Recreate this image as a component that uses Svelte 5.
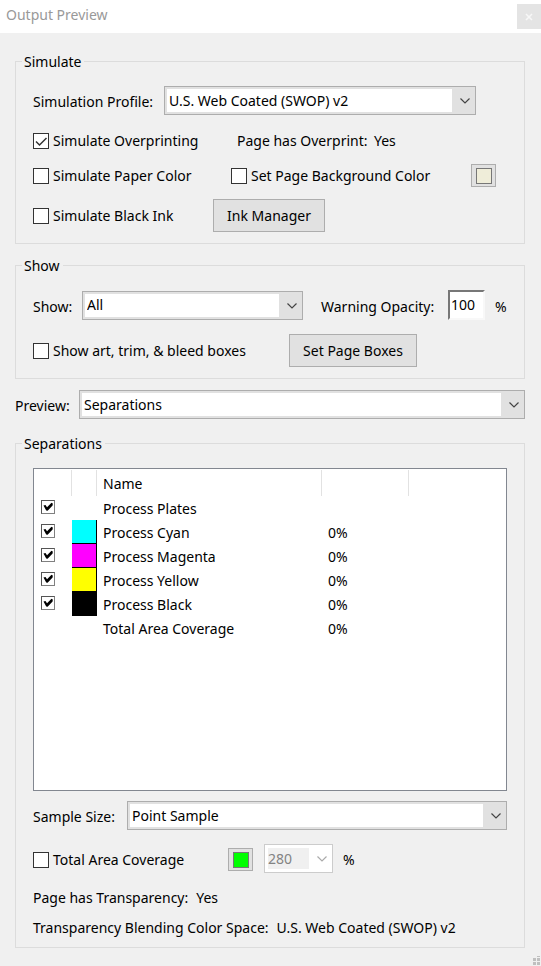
<script lang="ts">
  type Plate = {
    name: string;
    color?: string;
    checked?: boolean;
    coverage?: string;
  };

  let profile = $state('U.S. Web Coated (SWOP) v2');
  let show = $state('All');
  let preview = $state('Separations');
  let sampleSize = $state('Point Sample');
  let areaLimit = $state('280');

  let overprinting = $state(true);
  let paperColor = $state(false);
  let backgroundColor = $state(false);
  let blackInk = $state(false);
  let pageBoxes = $state(false);
  let totalArea = $state(false);
  let opacity = $state('100');

  let plates: Plate[] = $state([
    { name: 'Process Plates', checked: true },
    { name: 'Process Cyan', color: '#00ffff', checked: true, coverage: '0%' },
    { name: 'Process Magenta', color: '#ff00ff', checked: true, coverage: '0%' },
    { name: 'Process Yellow', color: '#ffff00', checked: true, coverage: '0%' },
    { name: 'Process Black', color: '#000000', checked: true, coverage: '0%' },
    { name: 'Total Area Coverage', coverage: '0%' },
  ]);
</script>

{#snippet chevron()}
  <svg class="chevron" width="10" height="6" viewBox="0 0 10 6" fill="none" stroke="currentColor">
    <path d="M0.5 0.5L5 5L9.5 0.5" stroke-width="1.2" />
  </svg>
{/snippet}

<main class="dialog">
  <header class="title-bar">
    <h1>Output Preview</h1>
    <button class="close-btn" aria-label="Close">
      <svg width="8" height="8" viewBox="0 0 8 8" stroke="currentColor" stroke-width="1.6">
        <path d="M1 1L7 7M7 1L1 7" />
      </svg>
    </button>
  </header>

  <div class="content">
    <fieldset>
      <legend>Simulate</legend>
      <div class="row profile-row">
        <label class="field-label" for="profile">Simulation Profile:</label>
        <div class="combo">
          <select id="profile" bind:value={profile}>
            <option>U.S. Web Coated (SWOP) v2</option>
          </select>
          {@render chevron()}
        </div>
      </div>
      <div class="row overprint-row">
        <label class="check"><input type="checkbox" bind:checked={overprinting} />Simulate Overprinting</label>
        <span>Page has Overprint:</span>
        <span>Yes</span>
      </div>
      <div class="row paper-row">
        <label class="check"><input type="checkbox" bind:checked={paperColor} />Simulate Paper Color</label>
        <label class="check"><input type="checkbox" bind:checked={backgroundColor} />Set Page Background Color</label>
        <button class="swatch-btn" aria-label="Page background color"><span class="swatch paper"></span></button>
      </div>
      <div class="row ink-row">
        <label class="check"><input type="checkbox" bind:checked={blackInk} />Simulate Black Ink</label>
        <button class="btn">Ink Manager</button>
      </div>
    </fieldset>

    <fieldset class="show-group">
      <legend>Show</legend>
      <div class="row show-row">
        <label class="field-label" for="show">Show:</label>
        <div class="combo">
          <select id="show" bind:value={show}>
            <option>All</option>
          </select>
          {@render chevron()}
        </div>
        <label class="field-label opacity-label" for="opacity">Warning Opacity:</label>
        <input id="opacity" class="text-input" type="text" bind:value={opacity} />
        <span class="field-label unit">%</span>
      </div>
      <div class="row boxes-row">
        <label class="check"><input type="checkbox" bind:checked={pageBoxes} />Show art, trim, &amp; bleed boxes</label>
        <button class="btn">Set Page Boxes</button>
      </div>
    </fieldset>

    <div class="row preview-row">
      <label class="field-label" for="preview">Preview:</label>
      <div class="combo">
        <select id="preview" bind:value={preview}>
          <option>Separations</option>
        </select>
        {@render chevron()}
      </div>
    </div>

    <fieldset class="separations">
      <legend>Separations</legend>
      <div class="plates">
        <table>
          <colgroup>
            <col class="col-check" />
            <col class="col-color" />
            <col class="col-name" />
            <col class="col-value" />
            <col />
          </colgroup>
          <thead>
            <tr>
              <th></th>
              <th></th>
              <th scope="col">Name</th>
              <th></th>
              <th></th>
            </tr>
          </thead>
          <tbody>
            {#each plates as plate}
              <tr>
                <td class="plate-check">
                  {#if plate.checked !== undefined}
                    <input type="checkbox" aria-label={plate.name} bind:checked={plate.checked} />
                  {/if}
                </td>
                <td class="plate-ink">
                  {#if plate.color}
                    <div class="plate-color" style="background: {plate.color}"></div>
                  {/if}
                </td>
                <td>{plate.name}</td>
                <td>{plate.coverage ?? ''}</td>
                <td></td>
              </tr>
            {/each}
          </tbody>
        </table>
      </div>

      <div class="row sample-row">
        <label class="field-label" for="sample">Sample Size:</label>
        <div class="combo">
          <select id="sample" bind:value={sampleSize}>
            <option>Point Sample</option>
          </select>
          {@render chevron()}
        </div>
      </div>
      <div class="row area-row">
        <label class="check"><input type="checkbox" bind:checked={totalArea} />Total Area Coverage</label>
        <button class="swatch-btn" aria-label="Coverage highlight color"><span class="swatch green"></span></button>
        <div class="combo disabled">
          <select aria-label="Total area coverage limit" bind:value={areaLimit} disabled>
            <option>280</option>
          </select>
          {@render chevron()}
        </div>
        <span class="field-label unit">%</span>
      </div>
      <div class="row info-row">
        <span>Page has Transparency:</span>
        <span>Yes</span>
      </div>
      <div class="row info-row">
        <span>Transparency Blending Color Space:</span>
        <span>U.S. Web Coated (SWOP) v2</span>
      </div>
    </fieldset>
  </div>

  <svg class="grip" width="7" height="9" viewBox="0 0 7 9" fill="#bfbfbf">
    <path d="M4 0h3v1h-3zM0 2h3v3h-3zM4 2h3v3h-3zM0 6h3v3h-3zM4 6h3v3h-3z" />
  </svg>
</main>

<style>
  :global(body) {
    margin: 0;
    background: #f0f0f0;
  }

  .dialog {
    position: relative;
    box-sizing: border-box;
    min-height: 100vh;
    font-family: "Segoe UI", "Noto Sans", sans-serif;
    font-size: 14px;
    line-height: 20px;
    color: #000;
    background: #f0f0f0;
  }

  .dialog * {
    box-sizing: border-box;
  }

  button,
  input,
  select {
    margin: 0;
    font: inherit;
    color: inherit;
  }

  .title-bar {
    display: flex;
    align-items: flex-start;
    justify-content: space-between;
    height: 33px;
    padding: 4px 0 0 6px;
    background: #fff;
  }

  h1 {
    margin: 0;
    font-size: 14px;
    font-weight: 400;
    line-height: 22px;
    color: #999;
  }

  .close-btn {
    display: flex;
    align-items: center;
    justify-content: center;
    width: 24px;
    height: 25px;
    padding: 0;
    border: none;
    background: #e4e4e4;
    color: #f7f7f7;
  }

  .content {
    padding: 19px 16px 18px 15px;
  }

  fieldset {
    display: flex;
    flex-direction: column;
    gap: 12px;
    min-width: 0;
    margin: 0;
    padding: 15px 17px 11px;
    border: 1px solid #dcdcdc;
  }

  legend {
    height: 19px;
    margin-left: -11px;
    padding: 0 3px 0 2px;
  }

  .show-group {
    gap: 15px;
    margin-top: 12px;
  }

  .row {
    display: grid;
    align-items: center;
    min-height: 22px;
    white-space: nowrap;
  }

  /* field captions sit slightly below the text inside their controls */
  .field-label {
    padding-top: 3px;
  }

  .profile-row {
    grid-template-columns: 131px minmax(0, 312px);
    margin-bottom: 3px;
  }

  .overprint-row {
    grid-template-columns: 204px 137px auto;
  }

  .paper-row {
    grid-template-columns: 198px 240px 25px;
  }

  .ink-row {
    grid-template-columns: 180px 112px;
  }

  .show-row {
    grid-template-columns: 49px minmax(0, 221px) 145px 37px auto;
    height: 29px;
  }

  .opacity-label {
    padding-left: 18px;
  }

  .unit {
    padding-left: 10px;
  }

  .boxes-row {
    grid-template-columns: 256px 128px;
  }

  .preview-row {
    grid-template-columns: 64px 1fr;
    margin: 11px 0 15px;
  }

  .sample-row {
    grid-template-columns: 94px 1fr;
  }

  .area-row {
    grid-template-columns: 195px 36px 69px auto;
    margin: 4px 0 5px;
  }

  .area-row .check {
    padding-top: 2px;
  }

  .area-row .swatch-btn {
    margin-top: 2px;
  }

  .check {
    display: flex;
    align-items: center;
    gap: 4px;
  }

  input[type='checkbox'] {
    appearance: none;
    flex: none;
    width: 16px;
    height: 16px;
    border: 1px solid #333;
    background: #fff no-repeat center;
  }

  .check input:checked {
    background-image: url("data:image/svg+xml,%3Csvg xmlns='http://www.w3.org/2000/svg' width='14' height='14' fill='none' stroke='%23333' stroke-width='1.5'%3E%3Cpath d='M2 7.5l3.5 3.5L12.5 4'/%3E%3C/svg%3E");
  }

  .combo {
    position: relative;
    height: 29px;
  }

  select {
    display: block;
    appearance: none;
    width: 100%;
    height: 29px;
    padding: 0 26px 0 4px;
    border: 1px solid #adadad;
    border-radius: 0;
    outline: none;
    background: #e1e1e1 linear-gradient(#fff, #fff) no-repeat 2px 2px / calc(100% - 25px) 23px;
  }

  .chevron {
    position: absolute;
    top: 12px;
    right: 6px;
    color: #444;
    pointer-events: none;
  }

  .disabled select {
    padding-left: 3px;
    border-color: #ccc;
    background: #fff linear-gradient(#f0f0f0, #f0f0f0) no-repeat 3px 3px / calc(100% - 26px) 21px;
    color: #838383;
    opacity: 1;
  }

  .disabled .chevron {
    color: #aaa;
  }

  .btn {
    height: 33px;
    padding: 0;
    border: 1px solid #adadad;
    background: #e1e1e1;
  }

  .swatch-btn {
    display: flex;
    align-items: center;
    justify-content: center;
    width: 25px;
    height: 23px;
    padding: 0;
    border: 1px solid #adadad;
    background: #e1e1e1;
  }

  .swatch {
    width: 16px;
    height: 16px;
    border: 1px solid #777;
  }

  .paper {
    background: #efedd9;
  }

  .green {
    background: #00ff00;
  }

  .text-input {
    width: 37px;
    height: 30px;
    padding: 0 0 2px 1px;
    border: 2px solid;
    border-color: #777 #f8f8f8 #f8f8f8 #777;
    outline: none;
    background: #fff;
  }

  .separations {
    gap: 10px;
    padding-bottom: 9px;
  }

  .plates {
    min-height: 323px;
    border: 1px solid #828790;
    background: #fff;
  }

  table {
    width: 100%;
    table-layout: fixed;
    border-collapse: collapse;
  }

  .col-check {
    width: 38px;
  }

  .col-color {
    width: 25px;
  }

  .col-name {
    width: 225px;
  }

  .col-value {
    width: 87px;
  }

  th {
    height: 27px;
    padding: 2px 0 0 6px;
    background: linear-gradient(#e2e2e2, #e2e2e2) no-repeat right bottom / 1px 26px;
    font-weight: 400;
    text-align: left;
  }

  th:last-child {
    background: none;
  }

  td {
    height: 24px;
    padding: 2px 0 0 6px;
  }

  .plate-ink {
    padding: 0;
  }

  .plate-check {
    padding: 0 0 2px 7px;
    line-height: 0;
  }

  .plate-check input[type='checkbox'] {
    width: 14px;
    height: 14px;
    border: 1px solid #808080;
    border-top-color: #555;
    border-left-color: #555;
  }

  .plate-check input:checked {
    background-image: url("data:image/svg+xml,%3Csvg xmlns='http://www.w3.org/2000/svg' width='12' height='12'%3E%3Cpath d='M1.5 4.5L3.5 4L5 6.3L9.5 1.8L10.8 2.6L10.6 4.6L5.6 9.8L4.2 9.6z'/%3E%3C/svg%3E");
  }

  .plate-color {
    height: 24px;
    border-right: 1px solid #000;
    border-bottom: 1px solid #000;
  }

  .info-row {
    display: flex;
    gap: 8px;
    height: 20px;
    min-height: 20px;
  }

  .grip {
    position: absolute;
    right: 1px;
    bottom: 1px;
  }
</style>
